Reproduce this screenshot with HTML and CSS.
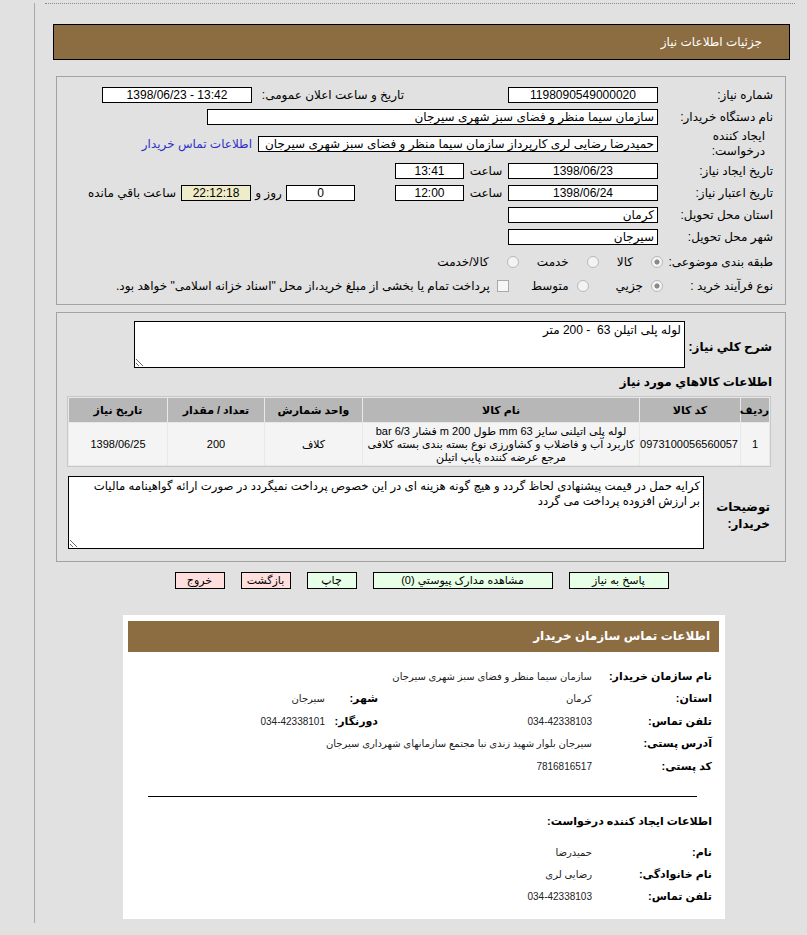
FILE: index.html
```html
<!DOCTYPE html>
<html lang="fa" dir="rtl">
<head>
<meta charset="utf-8">
<title>جزئیات اطلاعات نیاز</title>
<link rel="stylesheet" href="styles.css">
</head>
<body>
<div class="page">
  <div class="topline"></div>
  <div class="titlebar">جزئیات اطلاعات نیاز</div>

  <div class="box box1">
    <div class="row">
      <div class="lbl">شماره نیاز:</div>
      <div class="fld w150 c">1198090549000020</div>
      <div class="lbl2">تاريخ و ساعت اعلان عمومی:</div>
      <div class="fld w150 c ltr">1398/06/23 - 13:42</div>
    </div>
    <div class="row">
      <div class="lbl">نام دستگاه خریدار:</div>
      <div class="fld w451">سازمان سیما منظر و فضای سبز شهری سیرجان</div>
    </div>
    <div class="row row-tall">
      <div class="lbl lbl-two">ایجاد کننده<br>درخواست:</div>
      <div class="fld w400">حمیدرضا رضایی لری کارپرداز سازمان سیما منظر و فضای سبز شهری سیرجان</div>
      <a class="link" href="#">اطلاعات تماس خریدار</a>
    </div>
    <div class="row">
      <div class="lbl">تاریخ ایجاد نیاز:</div>
      <div class="fld w150 c">1398/06/23</div>
      <div class="unit">ساعت</div>
      <div class="fld w69 c">13:41</div>
    </div>
    <div class="row">
      <div class="lbl">تاریخ اعتبار نیاز:</div>
      <div class="fld w150 c">1398/06/24</div>
      <div class="unit">ساعت</div>
      <div class="fld w69 c">12:00</div>
      <div class="fld w69 c days">0</div>
      <div class="unit2">روز و</div>
      <div class="fld w70 c remain">22:12:18</div>
      <div class="after">ساعت باقي مانده</div>
    </div>
    <div class="row">
      <div class="lbl">استان محل تحویل:</div>
      <div class="fld w150">کرمان</div>
    </div>
    <div class="row">
      <div class="lbl">شهر محل تحویل:</div>
      <div class="fld w150">سیرجان</div>
    </div>
    <div class="row row-r8">
      <div class="lbl lbl-nogap">طبقه بندی موضوعی:</div>
      <div class="opts opts-a">
        <label class="opt"><input type="radio" name="cat" checked disabled><span>کالا</span></label>
        <label class="opt"><input type="radio" name="cat" disabled><span>خدمت</span></label>
        <label class="opt"><input type="radio" name="cat" disabled><span>کالا/خدمت</span></label>
      </div>
    </div>
    <div class="row row-r9">
      <div class="lbl lbl-nogap">نوع فرآیند خرید :</div>
      <div class="opts opts-b">
        <label class="opt"><input type="radio" name="proc" checked disabled><span>جزيي</span></label>
        <label class="opt"><input type="radio" name="proc" disabled><span>متوسط</span></label>
        <label class="opt opt-check"><input type="checkbox" disabled><span>پرداخت تمام یا بخشی از مبلغ خرید،از محل "اسناد خزانه اسلامی" خواهد بود.</span></label>
      </div>
    </div>
  </div>

  <div class="box box2">
    <div class="desc-row">
      <div class="blbl desc-lbl">شرح کلي نياز:</div>
      <textarea class="ta ta-desc" readonly>لوله پلی اتیلن 63  - 200 متر</textarea>
    </div>
    <div class="heading">اطلاعات کالاهاي مورد نياز</div>
    <table class="items">
      <thead>
        <tr>
          <th class="c-idx">ردیف</th>
          <th class="c-code">کد کالا</th>
          <th class="c-name">نام کالا</th>
          <th class="c-unit">واحد شمارش</th>
          <th class="c-qty">تعداد / مقدار</th>
          <th class="c-date">تاریخ نیاز</th>
        </tr>
      </thead>
      <tbody>
        <tr>
          <td>1</td>
          <td>0973100056560057</td>
          <td class="name">لوله پلی اتیلنی سایز 63 mm طول 200 m فشار 6/3 bar<br>کاربرد آب و فاضلاب و کشاورزی نوع بسته بندی بسته کلافی<br>مرجع عرضه کننده پایپ اتیلن</td>
          <td>کلاف</td>
          <td>200</td>
          <td>1398/06/25</td>
        </tr>
      </tbody>
    </table>
    <div class="notes-row">
      <div class="blbl notes-lbl">توضیحات<br>خریدار:</div>
      <textarea class="ta ta-notes" readonly>کرایه حمل در قیمت پیشنهادی لحاظ گردد و هیچ گونه هزینه ای در این خصوص پرداخت نمیگردد در صورت ارائه گواهینامه مالیات بر ارزش افزوده پرداخت می گردد</textarea>
    </div>
  </div>

  <div class="buttons">
    <button class="btn btn-green b100" type="button">پاسخ به نیاز</button>
    <button class="btn btn-green b180" type="button">مشاهده مدارک پيوستي (0)</button>
    <button class="btn btn-green b50" type="button">چاپ</button>
    <button class="btn btn-pink b50" type="button">بازگشت</button>
    <button class="btn btn-pink b50" type="button">خروج</button>
  </div>

  <div class="card">
    <div class="card-head">اطلاعات تماس سازمان خریدار</div>
    <div class="card-body">
      <table class="contact contact-org">
        <tr><th class="k1">نام سازمان خریدار:</th><td colspan="3">سازمان سیما منظر و فضای سبز شهری سیرجان</td></tr>
        <tr><th class="k1">استان:</th><td class="v1">کرمان</td><th class="k2">شهر:</th><td>سیرجان</td></tr>
        <tr><th class="k1">تلفن تماس:</th><td class="v1">034-42338103</td><th class="k2">دورنگار:</th><td>034-42338101</td></tr>
        <tr><th class="k1">آدرس پستی:</th><td colspan="3">سیرجان بلوار شهید زندی نبا مجتمع سازمانهای شهرداری سیرجان</td></tr>
        <tr><th class="k1">کد پستی:</th><td colspan="3">7816816517</td></tr>
      </table>
      <hr class="sep">
      <div class="sub">اطلاعات ایجاد کننده درخواست:</div>
      <table class="contact contact-person">
        <tr><th class="k1">نام:</th><td>حمیدرضا</td></tr>
        <tr><th class="k1">نام خانوادگی:</th><td>رضایی لری</td></tr>
        <tr><th class="k1">تلفن تماس:</th><td>034-42338103</td></tr>
      </table>
    </div>
  </div>
</div>
</body>
</html>
```

FILE: styles.css
```css
* { box-sizing: border-box; }
html, body { margin: 0; padding: 0; }
body {
  background: #e1e1e1;
  font-family: "Liberation Sans", "DejaVu Sans", sans-serif;
  font-size: 11px;
  color: #000;
  direction: rtl;
}
.page {
  margin-left: 34px;
  border-left: 1px solid #a9a9a9;
  height: 920px;
  padding: 0 17px 0 18px;
}
.topline {
  margin: 3px -5px 0 -8px;
  border-top: 1px dotted #8a8a8a;
  height: 1px;
}
.titlebar {
  margin-top: 20px;
  height: 36px;
  background: #8c6c41;
  border: 1px solid #000;
  color: #fff;
  font-size: 12px;
  line-height: 34px;
  padding-right: 27px;
}
.box {
  border: 1px solid #a2a2a2;
  margin-left: 3px;
  margin-right: 4px;
}
.box1 {
  margin-top: 16px;
  padding: 7px 12px 8px 0;
}
.row {
  display: flex;
  align-items: center;
  height: 22px;
  white-space: nowrap;
}
.row-tall { height: 32px; }
.row-r8 { height: 28px; }
.row-r9 { height: 20px; }
.lbl {
  width: 110px;
  margin-left: 5px;
  flex: none;
  font-size: 12px;
}
.lbl-two { line-height: 15px; padding-right: 8px; }
.lbl-nogap { margin-left: 0; }
.fld {
  flex: none;
  height: 16px;
  background: #fff;
  border: 1px solid #000;
  font-size: 12px;
  line-height: 14px;
  padding: 0 3px;
  overflow: hidden;
}
.fld.c { text-align: center; }
.fld.ltr { direction: ltr; }
.w150 { width: 150px; }
.w451 { width: 451px; }
.w400 { width: 400px; }
.w69 { width: 69px; }
.w70 { width: 70px; }
.lbl2 {
  flex: none;
  width: 147px;
  margin-right: 104px;
  margin-left: 5px;
  font-size: 12px;
}
.link {
  margin-right: 6px;
  color: #3030c8;
  text-decoration: none;
  font-size: 12px;
}
.unit {
  flex: none;
  width: 44px;
  text-align: center;
  font-size: 12px;
}
.days { margin-right: 40px; }
.unit2 {
  flex: none;
  width: 35px;
  text-align: center;
  font-size: 12px;
}
.remain { background: #efecc9; }
.after { margin-right: 5px; font-size: 12px; }

.opts { display: flex; align-items: center; }
.opt { display: flex; align-items: center; font-size: 12px; }
.opts-a .opt { gap: 18px; margin-left: 18px; }
.opts-b .opt { gap: 8px; margin-left: 27px; }
.opts-b .opt:nth-child(2) { margin-left: 22px; }
.opts-b .opt-check { gap: 7px; }
input[type="radio"], input[type="checkbox"] {
  appearance: none;
  -webkit-appearance: none;
  margin: 0;
  flex: none;
  width: 12px;
  height: 12px;
  border: 1px solid #b9b9b9;
  background: #f3f3f3;
}
input[type="radio"] { border-radius: 50%; }
input[type="radio"]:checked {
  background: radial-gradient(circle, #8a8a8a 0 2.3px, #f3f3f3 2.8px);
}
input[type="checkbox"] {
  width: 12px;
  height: 12px;
  background: #f6f6f6;
  border-color: #a9a9a9;
}

.box2 {
  margin-top: 7px;
  padding: 8px 13px 12px 0;
}
.blbl { font-weight: bold; font-size: 12px; }
.desc-row { display: flex; align-items: center; }
.desc-lbl { width: 87px; flex: none; padding-top: 4px; }
.ta {
  display: block;
  background: #fff;
  border: 1px solid #000;
  font-family: "Liberation Sans", "DejaVu Sans", sans-serif;
  font-size: 12px;
  line-height: 15px;
  padding: 1px 3px;
  color: #000;
  resize: both;
  direction: rtl;
}
.ta-desc { width: 551px; height: 47px; }
.heading {
  margin-top: 6px;
  font-weight: bold;
  font-size: 12px;
  line-height: 16px;
}
.items {
  margin: 6px 1px 0 12px;
  width: 703px;
  border: 1px solid #c7c7c7;
  border-spacing: 1px;
  background: #e8e8e8;
  font-size: 11px;
  table-layout: fixed;
}
.items th {
  background: #b7b7b7;
  height: 24px;
  font-weight: bold;
  padding: 0;
}
.items td {
  background: #f4f4f4;
  height: 42px;
  text-align: center;
  padding: 0 2px;
  line-height: 13px;
  white-space: nowrap;
  overflow: hidden;
}
.c-idx { width: 28px; }
.c-code { width: 100px; }
.c-name { width: 276px; }
.c-unit { width: 97px; }
.c-qty { width: 96px; }
.c-date { width: 98px; }
.notes-row { display: flex; align-items: center; margin-top: 9px; }
.notes-lbl { width: 68px; flex: none; line-height: 17px; padding-right: 2px; padding-top: 6px; }
.ta-notes { width: 636px; height: 73px; font-size: 11.7px; padding: 1px 3px 1px 13px; }

.buttons {
  display: flex;
  justify-content: center;
  gap: 16px;
  margin-top: 10px;
}
.btn {
  height: 17px;
  border: 1px solid #000;
  font-family: "Liberation Sans", "DejaVu Sans", sans-serif;
  font-size: 11px;
  line-height: 15px;
  padding: 0;
  color: #000;
}
.btn-green { background: #e6ffe6; }
.btn-pink { background: #ffdede; }
.b100 { width: 100px; }
.b180 { width: 180px; }
.b50 { width: 50px; }

.card {
  margin: 26px 65px 0 70px;
  background: #fff;
  height: 304px;
  padding: 6px 6px 0 5px;
}
.card-head {
  height: 31px;
  background: #8c6c41;
  color: #fff;
  font-weight: bold;
  font-size: 12px;
  line-height: 31px;
  padding-right: 9px;
}
.card-body { padding: 0 7px 0 20px; }
.contact {
  border-collapse: collapse;
  font-size: 10px;
}
.contact-org { margin-top: 13px; }
.contact th {
  text-align: right;
  font-weight: bold;
  font-size: 11px;
  padding: 0;
  white-space: nowrap;
}
.contact td {
  color: #222;
  padding: 0 5px 0 0;
  white-space: nowrap;
}
.contact tr { height: 22.5px; }
.k1 { width: 115px; }
.v1 { width: 212px; }
.contact .k2 { width: 55px; padding-right: 7px; }
.sep {
  margin: 18px 15px 0 0;
  border: 0;
  border-top: 1px solid #000;
  height: 0;
}
.sub {
  margin-top: 16px;
  font-weight: bold;
  font-size: 11px;
  line-height: 16px;
}
.contact-person { margin-top: 13px; }
.contact-person tr { height: 22px; }
```
